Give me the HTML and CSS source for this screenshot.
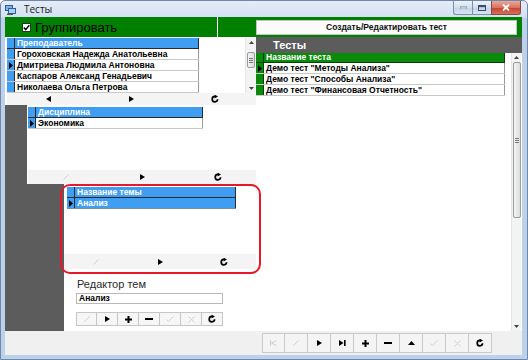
FILE: index.html
```html
<!DOCTYPE html>
<html lang="ru">
<head>
<meta charset="utf-8">
<title>Тесты</title>
<link rel="stylesheet" href="styles.css">
</head>
<body>
<div class="window">
  <div class="titlebar">
    <svg class="app-icon" width="11" height="10" viewBox="0 0 11 10"><rect x="0.5" y="0.5" width="7" height="5" fill="#7fb2e6" stroke="#2d5f9a"/><rect x="3.5" y="3.5" width="7" height="5" fill="#a9cff2" stroke="#2d5f9a"/><rect x="2" y="8.5" width="6" height="1.5" fill="#555"/></svg>
    <span class="title">Тесты</span>
    <div class="caption">
      <div class="cap-btn"><svg width="7" height="3" viewBox="0 0 7 3"><rect x="0" y="1" width="7" height="2" fill="#fff" stroke="#3b4d66" stroke-width="0.6"/></svg></div>
      <div class="cap-btn"><svg width="8" height="6" viewBox="0 0 8 6"><rect x="0.5" y="0.5" width="7" height="5" fill="none" stroke="#3b4d66"/><rect x="1" y="1" width="6" height="1.2" fill="#3b4d66"/></svg></div>
      <div class="cap-btn close"><svg width="8" height="7" viewBox="0 0 8 7"><path d="M1 0.5L7 6.5M7 0.5L1 6.5" stroke="#fff" stroke-width="1.8"/></svg></div>
    </div>
  </div>

  <div class="client">
    <div class="topbar">
      <div class="group">
        <span class="chk"><svg width="7" height="7" viewBox="0 0 7 7"><path d="M0.8 3.6L2.7 5.6L6.3 1.2" stroke="#000" stroke-width="1.4" fill="none"/></svg></span>
        <span class="group-label">Группировать</span>
      </div>
      <div class="vline"></div>
      <div class="btnwrap"><div class="create-btn">Создать/Редактировать тест</div></div>
    </div>

    <div class="main">
      <div class="left">
        <!-- Teachers -->
        <div class="panel p1">
          <div class="grid-area a1">
            <div class="grid g1">
              <div class="row head"><span class="ind"></span><span class="cell">Преподаватель</span></div>
              <div class="row"><span class="ind"></span><span class="cell">Гороховская Надежда Анатольевна</span></div>
              <div class="row"><span class="ind cur"><svg width="4" height="7" viewBox="0 0 4 7"><path d="M0 0L4 3.5L0 7Z"/></svg></span><span class="cell">Дмитриева Людмила Антоновна</span></div>
              <div class="row"><span class="ind"></span><span class="cell">Каспаров Александ Генадьевич</span></div>
              <div class="row"><span class="ind"></span><span class="cell">Николаева Ольга Петрова</span></div>
            </div>
            <div class="fill"></div>
            <div class="vscroll small">
              <span class="arr"><svg width="5" height="3" viewBox="0 0 5 3"><path d="M0 3L2.5 0L5 3Z" fill="#444"/></svg></span>
              <span class="thumb t1"><i></i><i></i><i></i></span>
              <span class="track"></span>
              <span class="arr"><svg width="5" height="3" viewBox="0 0 5 3"><path d="M0 0L2.5 3L5 0Z" fill="#444"/></svg></span>
            </div>
          </div>
          <div class="nav n1">
            <span class="nb"><svg width="5" height="6" viewBox="0 0 5 6"><path d="M5 0V6L0 3Z"/></svg></span>
            <span class="nb"><svg width="5" height="6" viewBox="0 0 5 6"><path d="M0 0V6L5 3Z"/></svg></span>
            <span class="nb"><svg class="ref" width="8" height="8" viewBox="0 0 8 8"><path d="M6.6 4.3A2.7 2.7 0 1 1 4 1.4" stroke="#000" stroke-width="1.7" fill="none"/><path d="M3.6 -0.4L7 1.5L3.6 3.4Z"/></svg></span>
          </div>
        </div>

        <!-- Disciplines -->
        <div class="panel p2">
          <div class="grid-area a2">
            <div class="grid g2">
              <div class="row head"><span class="ind"></span><span class="cell">Дисциплина</span></div>
              <div class="row"><span class="ind cur"><svg width="4" height="7" viewBox="0 0 4 7"><path d="M0 0L4 3.5L0 7Z"/></svg></span><span class="cell">Экономика</span></div>
            </div>
          </div>
          <div class="nav n2">
            <span class="nb"><svg width="6" height="6" viewBox="0 0 6 6"><path d="M5.5 0.5L0.5 5.5" stroke="#cfcfcf" stroke-width="1"/></svg></span>
            <span class="nb"><svg width="5" height="6" viewBox="0 0 5 6"><path d="M0 0V6L5 3Z"/></svg></span>
            <span class="nb"><svg class="ref" width="8" height="8" viewBox="0 0 8 8"><path d="M6.6 4.3A2.7 2.7 0 1 1 4 1.4" stroke="#000" stroke-width="1.7" fill="none"/><path d="M3.6 -0.4L7 1.5L3.6 3.4Z"/></svg></span>
          </div>
        </div>

        <!-- Topics -->
        <div class="panel p3">
          <div class="highlight"></div>
          <div class="grid-area a3">
            <div class="grid g3">
              <div class="row head"><span class="ind"></span><span class="cell">Название темы</span></div>
              <div class="row head sel"><span class="ind cur"><svg width="4" height="7" viewBox="0 0 4 7"><path d="M0 0L4 3.5L0 7Z"/></svg></span><span class="cell">Анализ</span></div>
            </div>
          </div>
          <div class="nav n3">
            <span class="nb"><svg width="6" height="6" viewBox="0 0 6 6"><path d="M5.5 0.5L0.5 5.5" stroke="#cfcfcf" stroke-width="1"/></svg></span>
            <span class="nb"><svg width="5" height="6" viewBox="0 0 5 6"><path d="M0 0V6L5 3Z"/></svg></span>
            <span class="nb"><svg class="ref" width="8" height="8" viewBox="0 0 8 8"><path d="M6.6 4.3A2.7 2.7 0 1 1 4 1.4" stroke="#000" stroke-width="1.7" fill="none"/><path d="M3.6 -0.4L7 1.5L3.6 3.4Z"/></svg></span>
          </div>
          <div class="editor">
            <div class="ed-label">Редактор тем</div>
            <div class="ed-input">Анализ</div>
            <div class="ed-buttons">
              <span class="eb"><svg width="6" height="6" viewBox="0 0 6 6"><path d="M5.5 0.5L0.5 5.5" stroke="#cfcfcf"/></svg></span>
              <span class="eb"><svg width="5" height="6" viewBox="0 0 5 6"><path d="M0 0V6L5 3Z"/></svg></span>
              <span class="eb"><svg width="7" height="7" viewBox="0 0 7 7"><path d="M3.5 0V7M0 3.5H7" stroke="#000" stroke-width="2"/></svg></span>
              <span class="eb"><svg width="8" height="2" viewBox="0 0 8 2"><rect width="8" height="2"/></svg></span>
              <span class="eb"><svg width="8" height="6" viewBox="0 0 8 6"><path d="M0.5 3.5L2.5 5.5L7.5 0.5" stroke="#d2d2d2" fill="none"/></svg></span>
              <span class="eb"><svg width="7" height="7" viewBox="0 0 7 7"><path d="M0.5 0.5L6.5 6.5M6.5 0.5L0.5 6.5" stroke="#d2d2d2"/></svg></span>
              <span class="eb"><svg class="ref" width="8" height="8" viewBox="0 0 8 8"><path d="M6.6 4.3A2.7 2.7 0 1 1 4 1.4" stroke="#000" stroke-width="1.7" fill="none"/><path d="M3.6 -0.4L7 1.5L3.6 3.4Z"/></svg></span>
            </div>
          </div>
        </div>
      </div>

      <div class="right">
        <div class="rhead">Тесты</div>
        <div class="rbody">
          <div class="grid g4">
            <div class="row head green"><span class="ind"></span><span class="cell">Название теста</span></div>
            <div class="row"><span class="ind cur"><svg width="4" height="7" viewBox="0 0 4 7"><path d="M0 0L4 3.5L0 7Z"/></svg></span><span class="cell">Демо тест "Методы Анализа"</span></div>
            <div class="row"><span class="ind"></span><span class="cell">Демо тест "Способы Анализа"</span></div>
            <div class="row"><span class="ind"></span><span class="cell">Демо тест "Финансовая Отчетность"</span></div>
          </div>
          <div class="fill"></div>
          <div class="vscroll big">
            <span class="arr"><svg width="5" height="3" viewBox="0 0 5 3"><path d="M0 3L2.5 0L5 3Z" fill="#444"/></svg></span>
            <span class="thumb t2"><i></i><i></i><i></i></span>
            <span class="track"></span>
            <span class="arr"><svg width="5" height="3" viewBox="0 0 5 3"><path d="M0 0L2.5 3L5 0Z" fill="#444"/></svg></span>
          </div>
        </div>
      </div>
    </div>

    <div class="bottombar">
      <span class="bb"><svg width="7" height="6" viewBox="0 0 7 6"><path d="M0.5 0V6" stroke="#d0d0d0"/><path d="M6.5 0.5L1.5 3L6.5 5.5" stroke="#d0d0d0" fill="none"/></svg></span>
      <span class="bb"><svg width="6" height="6" viewBox="0 0 6 6"><path d="M5.5 0.5L0.5 5.5" stroke="#cfcfcf"/></svg></span>
      <span class="bb"><svg width="5" height="6" viewBox="0 0 5 6"><path d="M0 0V6L5 3Z"/></svg></span>
      <span class="bb"><svg width="7" height="6" viewBox="0 0 7 6"><path d="M0 0V6L4.5 3Z"/><rect x="5" y="0" width="1.6" height="6"/></svg></span>
      <span class="bb"><svg width="7" height="7" viewBox="0 0 7 7"><path d="M3.5 0V7M0 3.5H7" stroke="#000" stroke-width="2"/></svg></span>
      <span class="bb"><svg width="8" height="2" viewBox="0 0 8 2"><rect width="8" height="2"/></svg></span>
      <span class="bb"><svg width="7" height="4" viewBox="0 0 7 4"><path d="M0 4L3.5 0L7 4Z"/></svg></span>
      <span class="bb"><svg width="8" height="6" viewBox="0 0 8 6"><path d="M0.5 3.5L2.5 5.5L7.5 0.5" stroke="#d2d2d2" fill="none"/></svg></span>
      <span class="bb"><svg width="7" height="7" viewBox="0 0 7 7"><path d="M0.5 0.5L6.5 6.5M6.5 0.5L0.5 6.5" stroke="#d2d2d2"/></svg></span>
      <span class="bb"><svg class="ref" width="8" height="8" viewBox="0 0 8 8"><path d="M6.6 4.3A2.7 2.7 0 1 1 4 1.4" stroke="#000" stroke-width="1.7" fill="none"/><path d="M3.6 -0.4L7 1.5L3.6 3.4Z"/></svg></span>
    </div>
  </div>
</div>
</body>
</html>
```

FILE: styles.css
```css
* { box-sizing: border-box; margin: 0; padding: 0; }

html, body {
  width: 528px;
  height: 360px;
  overflow: hidden;
  background: #ffffff;
}

body {
  font-family: "Liberation Sans", Arial, sans-serif;
  color: #000;
}

.window {
  width: 528px;
  height: 360px;
  display: flex;
  flex-direction: column;
  border: 1px solid #7088a8;
  border-radius: 5px 5px 0 0;
  background: linear-gradient(180deg, #e4ecf7 0px, #d3e1f2 16px, #bdd2ea 17px, #bcd1ea 100%);
}

/* Title bar */
.titlebar {
  height: 16px;
  display: flex;
  align-items: center;
  padding-left: 4px;
}

.app-icon { display: block; margin-top: 1px; }

.title {
  margin-left: 8px;
  font-family: "Open Sans", "Noto Sans", sans-serif;
  font-size: 10px;
  color: #1c1c1c;
  line-height: 12px;
}

.caption {
  margin-left: auto;
  margin-right: 6px;
  align-self: flex-start;
  display: flex;
}

.cap-btn {
  width: 19px;
  height: 14px;
  display: flex;
  align-items: center;
  justify-content: center;
  border: 1px solid #7d8fa8;
  border-top: none;
  border-right: none;
  background: linear-gradient(180deg, #eef3fa, #d2dfee 50%, #c2d3e8 51%, #d8e4f2);
}

.cap-btn:first-child { border-bottom-left-radius: 3px; }

.cap-btn.close {
  width: 30px;
  border-right: 1px solid #7a4f4f;
  border-color: #8a4a44;
  border-bottom-right-radius: 3px;
  background: linear-gradient(180deg, #e9a99c, #d9735f 50%, #c7412d 51%, #d5705a);
}

/* Client */
.client {
  flex: 1;
  margin: 0 5px 4px 4px;
  display: flex;
  flex-direction: column;
  background: #f0f0f0;
}

.topbar {
  height: 20px;
  display: flex;
  background: #008000;
}

.group {
  width: 212px;
  display: flex;
  align-items: center;
  padding-left: 17px;
  gap: 4px;
}

.chk {
  width: 9px;
  height: 9px;
  background: #fff;
  border: 1px solid #1d3c1d;
  display: flex;
  align-items: center;
  justify-content: center;
}

.group-label {
  font-size: 13px;
  line-height: 15px;
  color: #000;
}

.vline { width: 1px; background: #ffffff; }

.btnwrap {
  flex: 1;
  padding: 3px 5px 2px 38px;
}

.create-btn {
  height: 15px;
  background: #fbfbfb;
  border: 1px solid #c3c3c3;
  font-size: 8.5px;
  font-weight: bold;
  line-height: 13px;
  text-align: center;
  color: #111;
}

.main {
  height: 294px;
  display: flex;
}

/* Left column */
.left {
  width: 251px;
  background: #5c5c5c;
  display: flex;
  flex-direction: column;
  align-items: flex-end;
}

.panel {
  background: #ffffff;
  display: flex;
  flex-direction: column;
}

.p1 { width: 251px; height: 68px; padding-left: 2px; }
.p2 { width: 229px; height: 79px; padding-left: 1px; }
.p3 { width: 192px; flex: 1; position: relative; }

.grid-area { display: flex; }
.a1 { height: 56px; padding-top: 1px; }
.a2 { height: 65px; padding-top: 2px; }
.a3 { height: 70px; padding-top: 3px; padding-left: 3px; }

.grid { display: flex; flex-direction: column; }
.g1 { width: 192px; }
.g2 { width: 175px; }
.g3 { width: 169px; }
.g4 { width: 249px; }

.fill { flex: 1; }

.row {
  display: flex;
  height: 11px;
  border-bottom: 1px solid #c9c9c9;
}

.ind {
  width: 8px;
  background: #3f9ef2;
  border-right: 1px solid #2a2a2a;
  display: flex;
  align-items: center;
  justify-content: center;
}

.ind.cur svg { display: block; fill: #000; }

.cell {
  flex: 1;
  padding-left: 2px;
  font-size: 8.5px;
  font-weight: bold;
  line-height: 10px;
  white-space: nowrap;
  overflow: hidden;
  border-right: 1px solid #9a9a9a;
  color: #000;
}

.row.head .cell {
  background: #3f9ef2;
  color: #ffffff;
  border-right-color: #2a2a2a;
}

.row.head { border-bottom-color: #2a2a2a; }
.row.head.sel { border-bottom-color: #7b8ea0; }

.g4 .row .ind { background: #0a8a0a; border-right-color: #0b3d0b; }
.row.green { height: 10px; border-bottom-color: #0b3d0b; }
.row.green .cell { background: #0a8a0a; color: #fff; line-height: 9px; border-right-color: #0b3d0b; }

/* scrollbars */
.vscroll {
  display: flex;
  flex-direction: column;
  align-items: center;
  background: #f3f3f3;
  border-left: 1px solid #e4e4e4;
}

.vscroll.small { width: 11px; }
.vscroll.big { width: 10px; margin-right: 1px; }

.arr {
  height: 9px;
  width: 100%;
  display: flex;
  align-items: center;
  justify-content: center;
}

.thumb {
  width: 8px;
  border: 1px solid #9c9c9c;
  border-radius: 2px;
  background: linear-gradient(90deg, #f4f4f4, #dcdcdc);
  display: flex;
  flex-direction: column;
  align-items: center;
  justify-content: center;
  gap: 1px;
}

.thumb i { display: block; width: 4px; height: 1px; background: #777; }

.t1 { height: 16px; margin-top: 5px; }
.t2 { height: 156px; }
.track { flex: 1; }

/* nav bars */
.nav {
  display: flex;
  background: #f4f4f4;
}

.n1 { height: 12px; }
.n2 { height: 14px; }
.n3 { height: 15px; }

.nb {
  flex: 1;
  display: flex;
  align-items: center;
  justify-content: center;
}

.nb svg { display: block; fill: #000; }

/* highlight */
.highlight {
  position: absolute;
  left: -4px;
  top: 0;
  width: 201px;
  height: 90px;
  border: 2.5px solid #e8182a;
  border-radius: 10px;
  pointer-events: none;
}

/* Editor */
.editor {
  display: flex;
  flex-direction: column;
  padding-left: 12px;
}

.ed-label {
  margin-top: 9px;
  height: 12px;
  padding-left: 1px;
  font-size: 11px;
  line-height: 12px;
  color: #2a2a2a;
}

.ed-input {
  margin-top: 3px;
  width: 147px;
  height: 11px;
  border: 1px solid #b9b9b9;
  padding-left: 2px;
  font-size: 8.5px;
  font-weight: bold;
  line-height: 9px;
}

.ed-buttons {
  margin-top: 8px;
  display: flex;
  width: 147px;
  height: 14px;
}

.eb {
  width: 21px;
  display: flex;
  align-items: center;
  justify-content: center;
  background: #f6f6f6;
  border: 1px solid #c6c6c6;
  border-left: none;
}

.eb:first-child { border-left: 1px solid #c6c6c6; }
.eb svg { display: block; fill: #000; }

/* Right column */
.right {
  width: 266px;
  display: flex;
  flex-direction: column;
}

.rhead {
  height: 16px;
  background: #5c5c5c;
  color: #fff;
  font-size: 11px;
  font-weight: bold;
  line-height: 16px;
  padding-left: 17px;
}

.rbody {
  flex: 1;
  display: flex;
  background: #ffffff;
}

/* Bottom bar */
.bottombar {
  flex: 1;
  display: flex;
  padding: 2px 0 2px 257px;
  background: #f0f0f0;
}

.bb {
  width: 23px;
  display: flex;
  align-items: center;
  justify-content: center;
  background: #f4f4f4;
  border: 1px solid #cacaca;
  border-left: none;
}

.bb:first-child { border-left: 1px solid #cacaca; }
.bb svg { display: block; fill: #000; }
```
